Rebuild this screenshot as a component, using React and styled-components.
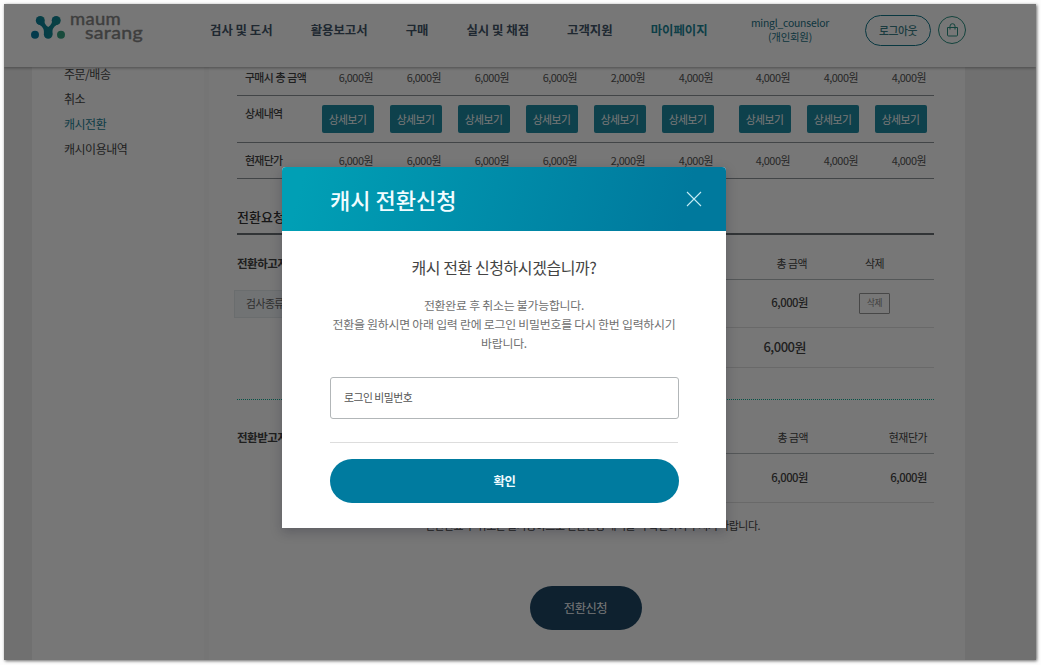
import React from "react";
import styled, { createGlobalStyle } from "styled-components";

const GlobalStyle = createGlobalStyle`
  * {
    box-sizing: border-box;
  }
  body {
    margin: 0;
    background-color: #fdfdfd;
    font-family: "Noto Sans CJK KR", "Noto Sans", sans-serif;
    letter-spacing: -0.03em;
    color: #3c3c3c;
  }
  button, input {
    font-family: inherit;
    letter-spacing: inherit;
  }
`;

const Page = styled.div`
  height: 665px;
  padding: 4px;
  overflow: hidden;
`;

const Frame = styled.div`
  position: relative;
  width: 1032px;
  height: 656px;
  overflow: hidden;
  background-color: #f0f0f0;
  box-shadow: 1px 1px 3px rgba(0, 0, 0, 0.6);
`;

const Header = styled.header`
  position: relative;
  display: flex;
  align-items: flex-start;
  height: 63px;
  padding-left: 26px;
  background-color: #fff;
  box-shadow: 0 1px 3px rgba(0, 0, 0, 0.35);
`;

const Logo = styled.svg`
  display: block;
  width: 180px;
  height: 42px;
  flex: none;
`;

const Nav = styled.nav`
  display: flex;
  gap: 38px;
  width: 538px;
  padding-top: 16px;
  letter-spacing: 0;
`;

const NavItem = styled.a`
  font-size: 12.4px;
  font-weight: 700;
  line-height: 20px;
  white-space: nowrap;
  color: ${(props) => (props.$active ? "#1d8799" : "#44566a")};
`;

const Account = styled.div`
  width: 84px;
  padding-top: 12px;
  font-size: 10.4px;
  line-height: 14px;
  text-align: center;
  letter-spacing: -0.02em;
  color: #1a7286;
`;

const LogoutButton = styled.button`
  width: 66px;
  height: 31px;
  margin: 11px 7px 0 33px;
  padding: 0 0 1px;
  border: 1px solid #13788c;
  border-radius: 16px;
  background: none;
  font-size: 10.8px;
  font-weight: 500;
  color: #3a7f88;
`;

const CartButton = styled.button`
  display: flex;
  align-items: center;
  justify-content: center;
  width: 28px;
  height: 28px;
  margin-top: 12px;
  padding: 0;
  border: 1px solid #2a9182;
  border-radius: 50%;
  background: none;
`;

const Body = styled.div`
  display: flex;
  width: 933px;
  height: 593px;
  margin-left: 28px;
  background-color: #fff;
`;

const Sidebar = styled.aside`
  width: 177px;
  padding: 0 0 0 32px;
  border-right: 5px solid #fafafa;
`;

const SideItem = styled.a`
  display: block;
  height: 25px;
  font-size: 12px;
  line-height: 14px;
  color: ${(props) => (props.$active ? "#1d8296" : "#484848")};
`;

const Content = styled.main`
  width: 697px;
  margin-left: 28px;
`;

const PriceRow = styled.div`
  display: grid;
  grid-template-columns: 60px repeat(6, 68px) 77px 68px 68px;
  justify-items: end;
  align-items: start;
  height: ${(props) => props.$height}px;
  padding: ${(props) => props.$top}px 8px 0;
  border-bottom: 1px solid #8d9599;
  font-size: 10.9px;
  line-height: 16px;
  color: #555;
`;

const RowLabel = styled.span`
  justify-self: start;
  font-weight: 500;
  white-space: nowrap;
  letter-spacing: -0.06em;
  word-spacing: 0.06em;
  color: #444;
`;

const DetailButton = styled.button`
  width: 52px;
  height: 28px;
  margin-right: -0.5px;
  padding: 0;
  border: 0;
  border-radius: 2px;
  background-color: #1f8ba3;
  font-size: 10.8px;
  letter-spacing: -0.05em;
  color: #fff;
`;

const SectionTitle = styled.h2`
  height: 56px;
  margin: 0;
  padding-top: 28px;
  border-bottom: 2px solid #6a7074;
  font-size: 13px;
  font-weight: 500;
  line-height: 20px;
  letter-spacing: 0;
  color: #333;
`;

const Transfer = styled.section`
  display: flex;
  height: ${(props) => props.$height}px;
  border-bottom: ${(props) => (props.$dotted ? "1px dotted #10b39a" : "0")};
`;

const TransferSide = styled.div`
  width: 180px;
  padding-top: ${(props) => props.$top}px;
`;

const TransferTitle = styled.h3`
  margin: 0;
  font-size: 11.5px;
  font-weight: 700;
  line-height: 18px;
  color: #444;
`;

const TestSelect = styled.div`
  width: 160px;
  height: 28px;
  margin: 18px 0 0 -3px;
  padding-left: 11px;
  border: 1px solid #e3e9ec;
  background-color: #f2f6f9;
  font-size: 10.8px;
  line-height: 25px;
  color: #666;
`;

const TransferTable = styled.div`
  flex: 1;
`;

const TransferRow = styled.div`
  display: grid;
  grid-template-columns: 1fr ${(props) => props.$last}px;
  align-items: center;
  height: ${(props) => props.$height}px;
  padding: ${(props) => props.$top || 0}px ${(props) => props.$right}px
    ${(props) => (props.$top ? 0 : 3)}px 0;
  border-bottom: 1px solid ${(props) => (props.$light ? "#e2e2e2" : "#b5babc")};
  font-size: ${(props) => (props.$total ? 13 : 11.3)}px;
  font-weight: 500;
  text-align: right;
  color: #444;
`;

const HeadCell = styled.span`
  font-size: 10.9px;
  font-weight: 400;
`;

const DeleteButton = styled.button`
  justify-self: end;
  width: 31px;
  height: 21px;
  margin-top: 2px;
  padding: 0 0 2px;
  border: 1px solid #999;
  border-radius: 1px;
  background: none;
  font-size: 8.6px;
  color: #888;
`;

const Notice = styled.p`
  margin: 14px 0 0;
  padding-right: 174px;
  font-size: 10.9px;
  line-height: 18px;
  text-align: right;
  white-space: nowrap;
  color: #444;
`;

const SubmitButton = styled.button`
  display: block;
  width: 112px;
  height: 44px;
  margin: 52px auto 0;
  border: 0;
  border-radius: 22px;
  background-color: #1e4866;
  font-size: 12.3px;
  font-weight: 400;
  color: #fff;
`;

const Overlay = styled.div`
  position: absolute;
  inset: 0;
  padding: 163px 0 0 278px;
  background-color: rgba(0, 0, 0, 0.535);
`;

const Modal = styled.div`
  width: 444px;
  height: 361px;
  border-radius: 4px 4px 0 0;
  background-color: #fff;
  box-shadow: 0 4px 12px rgba(20, 20, 40, 0.25);
`;

const ModalHeader = styled.div`
  display: flex;
  align-items: center;
  justify-content: space-between;
  height: 64px;
  padding: 0 24px 0 48px;
  border-radius: 4px 4px 0 0;
  background: linear-gradient(105deg, #009fb5 5%, #00799d 90%);
`;

const ModalTitle = styled.h1`
  margin: 0;
  font-size: 22px;
  font-weight: 500;
  line-height: 32px;
  letter-spacing: 0;
  color: #f0fcff;
`;

const ModalBody = styled.div`
  padding: 24px 48px 0;
  text-align: center;
`;

const Question = styled.h2`
  margin: 0 0 16px;
  font-size: 16px;
  font-weight: 400;
  line-height: 24px;
  letter-spacing: -0.027em;
  color: #444;
`;

const Description = styled.p`
  margin: 0 -10px 25px;
  font-size: 11.9px;
  line-height: 19px;
  letter-spacing: -0.02em;
  color: #707070;
`;

const PasswordInput = styled.input`
  display: block;
  width: 349px;
  height: 42px;
  padding: 0 13px 2px;
  border: 1px solid #b2b6b8;
  border-radius: 3px;
  outline: 0;
  font-size: 10.8px;

  &::placeholder {
    color: #555;
    opacity: 1;
  }
`;

const Divider = styled.hr`
  height: 1px;
  margin: 23px 0 16px;
  border: 0;
  background-color: #ddd;
`;

const ConfirmButton = styled.button`
  display: block;
  width: 349px;
  height: 44px;
  border: 0;
  border-radius: 22px;
  background-color: #007b9f;
  font-size: 12.4px;
  font-weight: 700;
  color: #f0fbff;
`;

const menus = ["검사 및 도서", "활용보고서", "구매", "실시 및 채점", "고객지원", "마이페이지"];
const sideMenus = ["주문/배송", "취소", "캐시전환", "캐시이용내역"];
const prices = [
  "6,000원",
  "6,000원",
  "6,000원",
  "6,000원",
  "2,000원",
  "4,000원",
  "4,000원",
  "4,000원",
  "4,000원",
];

const BrandLogo = () => (
  <Logo viewBox="0 0 180 42">
    <defs>
      <linearGradient id="brand" x1="0" y1="0" x2="1" y2="0">
        <stop offset="0" stopColor="#087f9c" />
        <stop offset="1" stopColor="#158c90" />
      </linearGradient>
    </defs>
    <g fill="url(#brand)">
      <circle cx="10.3" cy="16.5" r="4.5" />
      <circle cx="26.2" cy="16.5" r="4.5" />
      <circle cx="18.2" cy="30.5" r="4.3" />
      <path d="M6.7 19.3c4 2 7.2 4.2 7.2 8.2v3h8.600v-3c0-4 3.200-6.200 7.200-8.200l-6.600-5.500c-.9 4.700-1.900 7.400-4.900 9.300c-3-1.900-4-4.600-4.900-9.300z" />
    </g>
    <circle cx="5" cy="30.7" r="4" fill="#087da4" />
    <circle cx="31" cy="30.7" r="4" fill="#37a280" />
    <g
      fill="#858585"
      stroke="#858585"
      strokeWidth="0.4"
      fontFamily="Lato, sans-serif"
      fontSize="17"
    >
      <text x="40" y="21" textLength="51" lengthAdjust="spacingAndGlyphs" letterSpacing="0.3">
        maum
      </text>
      <text x="55" y="34.5" textLength="58" lengthAdjust="spacingAndGlyphs" letterSpacing="0.3">
        sarang
      </text>
    </g>
  </Logo>
);

const BagIcon = () => (
  <svg width="13" height="14" viewBox="0 0 13 14" fill="none" stroke="#2a9182">
    <path d="M1.5 4.5h10v7.500a1 1 0 0 1-1 1h-8a1 1 0 0 1-1-1z" />
    <path d="M4 6.5V3.200a2.500 2.500 0 0 1 5 0v3.300" />
  </svg>
);

const CloseIcon = () => (
  <svg width="16" height="16" viewBox="0 0 16 16" stroke="#c4ebf5" strokeWidth="1.1">
    <path d="M1 1l14 14M15 1L1 15" />
  </svg>
);

const ConvertModal = () => (
  <Overlay>
    <Modal role="dialog">
      <ModalHeader>
        <ModalTitle>캐시 전환신청</ModalTitle>
        <CloseIcon />
      </ModalHeader>
      <ModalBody>
        <Question>캐시 전환 신청하시겠습니까?</Question>
        <Description>
          전환완료 후 취소는 불가능합니다.
          <br />
          전환을 원하시면 아래 입력 란에 로그인 비밀번호를 다시 한번 입력하시기
          <br />
          바랍니다.
        </Description>
        <PasswordInput type="password" placeholder="로그인 비밀번호" />
        <Divider />
        <ConfirmButton>확인</ConfirmButton>
      </ModalBody>
    </Modal>
  </Overlay>
);

const App = () => (
  <Page>
    <GlobalStyle />
    <Frame>
      <Header>
        <BrandLogo />
        <Nav>
          {menus.map((menu) => (
            <NavItem key={menu} $active={menu === "마이페이지"}>
              {menu}
            </NavItem>
          ))}
        </Nav>
        <Account>
          mingl_counselor
          <br />
          (개인회원)
        </Account>
        <LogoutButton>로그아웃</LogoutButton>
        <CartButton>
          <BagIcon />
        </CartButton>
      </Header>
      <Body>
        <Sidebar>
          {sideMenus.map((menu) => (
            <SideItem key={menu} $active={menu === "캐시전환"}>
              {menu}
            </SideItem>
          ))}
        </Sidebar>
        <Content>
          <PriceRow $height={29} $top={2}>
            <RowLabel>구매시 총 금액</RowLabel>
            {prices.map((price, i) => (
              <span key={i}>{price}</span>
            ))}
          </PriceRow>
          <PriceRow $height={47} $top={9}>
            <RowLabel>상세내역</RowLabel>
            {prices.map((price, i) => (
              <DetailButton key={i}>상세보기</DetailButton>
            ))}
          </PriceRow>
          <PriceRow $height={36} $top={9}>
            <RowLabel>현재단가</RowLabel>
            {prices.map((price, i) => (
              <span key={i}>{price}</span>
            ))}
          </PriceRow>
          <SectionTitle>전환요청</SectionTitle>
          <Transfer $height={165} $dotted>
            <TransferSide $top={19}>
              <TransferTitle>전환하고자 하는 검사</TransferTitle>
              <TestSelect>검사종류</TestSelect>
            </TransferSide>
            <TransferTable>
              <TransferRow $height={45} $last={77} $right={50} $top={11}>
                <HeadCell>총 금액</HeadCell>
                <HeadCell>삭제</HeadCell>
              </TransferRow>
              <TransferRow $height={48} $last={82} $right={44} $light>
                <span>6,000원</span>
                <DeleteButton>삭제</DeleteButton>
              </TransferRow>
              <TransferRow $height={40} $last={78} $right={50} $light $total>
                <span>6,000원</span>
              </TransferRow>
            </TransferTable>
          </Transfer>
          <Transfer $height={102}>
            <TransferSide $top={28}>
              <TransferTitle>전환받고자 하는 검사</TransferTitle>
            </TransferSide>
            <TransferTable>
              <TransferRow $height={54} $last={119} $right={7} $top={21}>
                <HeadCell>총 금액</HeadCell>
                <HeadCell>현재단가</HeadCell>
              </TransferRow>
              <TransferRow $height={49} $last={119} $right={7} $light>
                <span>6,000원</span>
                <span>6,000원</span>
              </TransferRow>
            </TransferTable>
          </Transfer>
          <Notice>전환완료 후 취소는 불가능하므로 전환신청 내역을 꼭 확인하여 주시기 바랍니다.</Notice>
          <SubmitButton>전환신청</SubmitButton>
        </Content>
      </Body>
      <ConvertModal />
    </Frame>
  </Page>
);

export default App;
